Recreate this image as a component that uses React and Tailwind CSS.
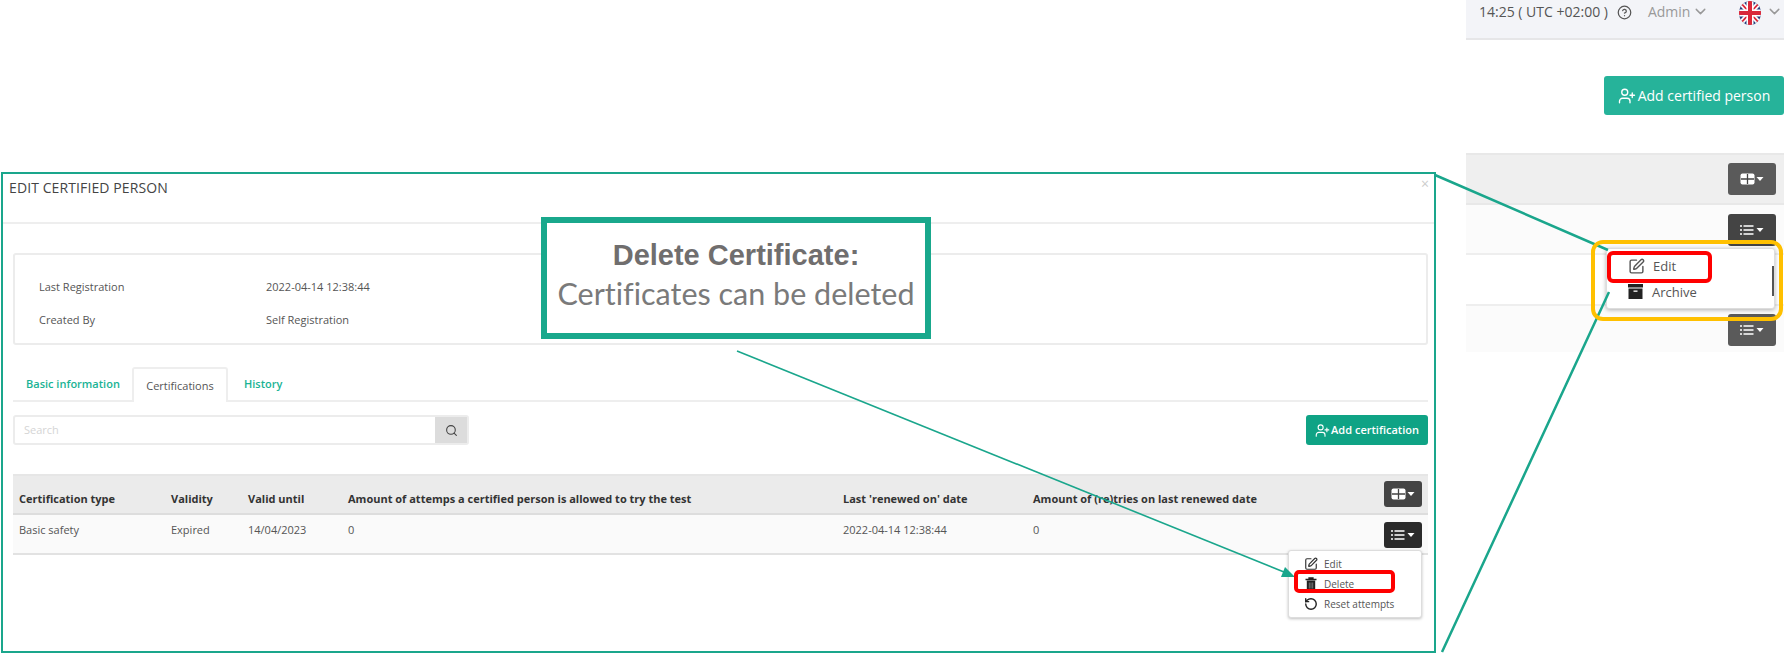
import React from "react";
import { ChevronDown, CircleHelp, RotateCcw, Search, SquarePen, UserPlus } from "lucide-react";

const COLUMNS = [
  { label: "Certification type", value: "Basic safety", width: "w-[152px]" },
  { label: "Validity", value: "Expired", width: "w-[77px]" },
  { label: "Valid until", value: "14/04/2023", width: "w-[100px]" },
  { label: "Amount of attemps a certified person is allowed to try the test", value: "0", width: "w-[495px]" },
  { label: "Last 'renewed on' date", value: "2022-04-14 12:38:44", width: "w-[190px]" },
  { label: "Amount of (re)tries on last renewed date", value: "0", width: "w-[300px]" },
];

function GridCaret() {
  return (
    <svg width="24" height="12" viewBox="0 0 24 12">
      <rect x="0.5" y="0.5" width="14" height="11" rx="2" fill="#fff" />
      <path d="M1 6h13M7.5 1v10" stroke="#444" strokeWidth="1.3" />
      <path d="M16.5 4h7l-3.5 4z" fill="#fff" />
    </svg>
  );
}

function ListCaret() {
  return (
    <svg width="24" height="12" viewBox="0 0 24 12">
      <path d="M3.5 2h10M3.5 6h10M3.5 10h10" stroke="#fff" strokeWidth="1.7" />
      <path d="M0 2h2M0 6h2M0 10h2" stroke="#fff" strokeWidth="1.7" />
      <path d="M16.5 4h7l-3.5 4z" fill="#fff" />
    </svg>
  );
}

function ArchiveIcon() {
  return (
    <svg width="15" height="15" viewBox="0 0 15 15">
      <rect x="0" y="0" width="15" height="3.5" fill="#222" />
      <rect x="0.5" y="4.5" width="14" height="10.5" fill="#222" />
      <rect x="5.5" y="6.5" width="4" height="1.3" fill="#fff" />
    </svg>
  );
}

function TrashIcon() {
  return (
    <svg width="14" height="14" viewBox="0 0 14 14">
      <path d="M1.5 2.5h11M5 2.5V1h4v1.5" stroke="#222" strokeWidth="1.3" fill="none" />
      <path d="M2.8 3.5h8.4V13.4H2.8z" fill="#222" />
      <path d="M5.3 5.5v6M7 5.5v6M8.7 5.5v6" stroke="#999" strokeWidth="0.7" />
    </svg>
  );
}

function UkFlag() {
  return (
    <svg width="22" height="24" viewBox="0 0 22 24">
      <defs>
        <clipPath id="flag-clip">
          <ellipse cx="11" cy="12" rx="11" ry="12" />
        </clipPath>
      </defs>
      <g clipPath="url(#flag-clip)">
        <rect width="22" height="24" fill="#27407e" />
        <path d="M0 0l22 24M22 0L0 24" stroke="#fff" strokeWidth="5" />
        <path d="M0 0l22 24M22 0L0 24" stroke="#d9283a" strokeWidth="1.8" />
        <path d="M11 0v24M0 12h22" stroke="#fff" strokeWidth="7" />
        <path d="M11 0v24M0 12h22" stroke="#d9283a" strokeWidth="4" />
      </g>
    </svg>
  );
}

function DarkButton({ className, children }) {
  return <div className={`flex items-center justify-center rounded-[3px] ${className}`}>{children}</div>;
}

function EditModal() {
  return (
    <section className="absolute left-[1px] top-[172px] flex h-[481px] w-[1435px] flex-col border-2 border-[#1aa68c] bg-white text-[#555]">
      <header className="relative h-[50px] border-b-2 border-[#eeeeee] pl-[6px] pt-[4px] text-[14px] leading-[20px] tracking-[0.1px] text-[#444]">
        EDIT CERTIFIED PERSON
        <span className="absolute right-[5px] top-[0px] text-[14px] text-[#ccc]">×</span>
      </header>

      <div className="ml-[10px] mr-[6px] mt-[29px] flex h-[92px] flex-col gap-[17px] rounded-[3px] border-2 border-[#ececec] pl-[24px] pt-[24px] text-[11px] leading-[16px]">
        <div className="flex">
          <span className="w-[227px]">Last Registration</span>
          <span>2022-04-14 12:38:44</span>
        </div>
        <div className="flex">
          <span className="w-[227px]">Created By</span>
          <span>Self Registration</span>
        </div>
      </div>

      <nav className="ml-[10px] mr-[6px] mt-[22px] flex h-[35px] border-b-2 border-[#eeeeee] text-[11px] font-semibold">
        <span className="flex w-[119px] items-center pl-[13px] pt-[2px] text-[#1ab394]">Basic information</span>
        <span className="-mb-[2px] flex w-[96px] items-center justify-center rounded-t-[3px] border-2 border-b-0 border-[#eeeeee] bg-white pt-[2px] font-normal text-[#555]">
          Certifications
        </span>
        <span className="flex items-center pl-[16px] pt-[2px] text-[#1ab394]">History</span>
      </nav>

      <div className="ml-[10px] mr-[6px] mt-[13px] flex h-[30px] justify-between">
        <div className="flex w-[456px] rounded-[3px] border-2 border-[#ececec]">
          <span className="flex flex-1 items-center pl-[9px] text-[11px] text-[#d5d5d5]">Search</span>
          <span className="flex w-[32px] items-center justify-center bg-[#dcdcdc] text-[#444]">
            <Search size={13} strokeWidth={2} />
          </span>
        </div>
        <div className="flex w-[122px] items-center justify-center gap-[1px] rounded-[3px] bg-[#0fa385] text-[11px] font-semibold text-white">
          <UserPlus size={15} strokeWidth={1.8} />
          Add certification
        </div>
      </div>

      <div className="relative ml-[10px] mr-[6px] mt-[29px]">
        <div className="flex h-[41px] items-center border-b-2 border-t-2 border-b-[#dddddd] border-t-[#e6e6e6] bg-[#ebebeb] pl-[6px] pt-[9px] text-[11px] font-bold text-[#333]">
          {COLUMNS.map((c) => (
            <span key={c.label} className={`${c.width} shrink-0 whitespace-nowrap`}>
              {c.label}
            </span>
          ))}
        </div>
        <div className="flex h-[40px] items-start border-b-2 border-[#e2e2e2] bg-[#fafafa] pl-[6px] pt-[7px] text-[11px] leading-[16px]">
          {COLUMNS.map((c) => (
            <span key={c.label} className={`${c.width} shrink-0 whitespace-nowrap`}>
              {c.value}
            </span>
          ))}
        </div>
        <DarkButton className="absolute right-[6px] top-[7px] h-[26px] w-[38px] bg-[#444]">
          <GridCaret />
        </DarkButton>
        <DarkButton className="absolute right-[6px] top-[48px] h-[26px] w-[38px] bg-[#2b2b2b]">
          <ListCaret />
        </DarkButton>

        <div className="absolute right-[6px] top-[76px] flex h-[68px] w-[134px] flex-col justify-center gap-[4px] rounded-[3px] border border-[#ddd] bg-white pl-[15px] text-[10px] leading-[16px] shadow-[0_1px_3px_rgba(0,0,0,0.25)]">
          <div className="flex items-center gap-[6px]"><SquarePen size={14} className="text-[#333]" /> Edit</div>
          <div className="flex items-center gap-[6px]"><TrashIcon /> Delete</div>
          <div className="flex items-center gap-[6px]"><RotateCcw size={14} strokeWidth={2.4} className="text-[#222]" /> Reset attempts</div>
        </div>
      </div>
    </section>
  );
}

function ListPanel() {
  return (
    <section className="absolute left-[1466px] top-0 flex h-[352px] w-[318px] flex-col text-[#555]">
      <div className="flex h-[40px] items-start border-b-2 border-[#e6e6e8] bg-[#f3f4f8] pl-[13px] pt-[2px] text-[14px] leading-[20px]">
        <span>14:25 ( UTC +02:00 )</span>
        <CircleHelp size={15} className="ml-[9px] mt-[3px]" />
        <span className="ml-[16px] text-[#999]">Admin</span>
        <ChevronDown size={17} className="ml-[2px] mt-[1px] text-[#999]" />
        <span className="ml-[30px] -mt-[1px]"><UkFlag /></span>
        <ChevronDown size={17} className="ml-[5px] mt-[1px] text-[#999]" />
      </div>

      <div className="mt-[36px] flex h-[39px] justify-end">
        <div className="flex w-[180px] items-center justify-center gap-[2px] rounded-[3px] bg-[#26b39a] text-[14px] font-normal text-white">
          <UserPlus size={18} strokeWidth={1.8} />
          Add certified person
        </div>
      </div>

      <div className="mt-[38px] flex h-[52px] items-center justify-end border-y-2 border-[#e8e8e8] bg-[#efefef] pr-[8px]">
        <DarkButton className="h-[32px] w-[48px] bg-[#5a5a5a]"><GridCaret /></DarkButton>
      </div>
      <div className="flex h-[50px] justify-end border-b-2 border-[#eeeeee] bg-[#fbfbfb] pr-[8px] pt-[9px]">
        <DarkButton className="h-[32px] w-[48px] bg-[#444]"><ListCaret /></DarkButton>
      </div>
      <div className="h-[51px] border-b-2 border-[#eeeeee] bg-white" />
      <div className="flex flex-1 justify-end bg-[#fbfbfb] pr-[8px] pt-[8px]">
        <DarkButton className="h-[32px] w-[48px] bg-[#5a5a5a]"><ListCaret /></DarkButton>
      </div>

      <div className="absolute left-[140px] top-[248px] flex h-[61px] w-[169px] flex-col justify-center gap-[9px] rounded-[3px] border border-[#ddd] bg-white pl-[21px] text-[13px] leading-[16px] shadow-[0_1px_4px_rgba(0,0,0,0.3)]">
        <div className="flex items-center gap-[8px]"><SquarePen size={17} /> Edit</div>
        <div className="flex items-center gap-[9px]"><ArchiveIcon /> Archive</div>
        <span className="absolute right-0 top-[17px] h-[30px] w-[2px] bg-[#555]" />
      </div>
    </section>
  );
}

export default function App() {
  return (
    <div className="relative h-[654px] w-[1791px] overflow-hidden bg-white font-['Open_Sans',sans-serif]">
      <EditModal />
      <ListPanel />

      {/* annotation layer */}
      <svg className="absolute left-0 top-0" width="1791" height="654" viewBox="0 0 1791 654">
        <path d="M1435 175L1608 250M1609 292L1442 652" stroke="#1aa68c" strokeWidth="2.5" fill="none" />
        <path d="M737 351L1284 572" stroke="#1aa68c" strokeWidth="1.6" fill="none" />
        <path d="M1295 577L1281 577L1285 567z" fill="#1aa68c" />
      </svg>
      <div className="absolute left-[1591px] top-[240px] h-[81px] w-[192px] rounded-[12px] border-[4px] border-[#ffc000]" />
      <div className="absolute left-[1607px] top-[251px] h-[32px] w-[105px] rounded-[6px] border-[4px] border-[#ff0000]" />
      <div className="absolute left-[1294px] top-[570px] h-[23px] w-[101px] rounded-[5px] border-[4px] border-[#ff0000]" />

      <div className="absolute left-[541px] top-[217px] flex h-[122px] w-[390px] flex-col items-center border-[6px] border-[#19a88c] bg-white pt-[13px]">
        <p className="font-['Liberation_Sans',sans-serif] text-[29px] font-bold leading-[38px] text-[#706e6e]">Delete Certificate:</p>
        <p className="font-['Lato',sans-serif] text-[30.5px] leading-[38px] text-[#7a7a7a] [font-variant-ligatures:none]">Certificates can be deleted</p>
      </div>
    </div>
  );
}
